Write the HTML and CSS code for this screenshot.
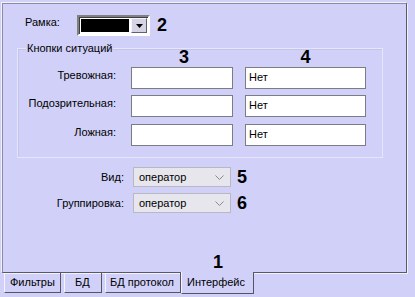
FILE: index.html
```html
<!DOCTYPE html>
<html>
<head>
<meta charset="utf-8">
<link rel="stylesheet" href="styles.css">
</head>
<body>
<div class="window">
  <div class="panel">
    <div class="frame-row">
      <span class="frame-label">Рамка:</span>
      <div class="colorbox">
        <div class="swatch"></div>
        <div class="dropbtn"><svg width="7" height="4" viewBox="0 0 7 4"><polygon points="0,0 7,0 3.5,4" fill="#000"/></svg></div>
      </div>
      <span class="num num-2">2</span>
    </div>

    <div class="group">
      <span class="legend">Кнопки ситуаций</span>
      <div class="grid">
        <span></span>
        <span class="num colnum c1">3</span>
        <span class="num colnum c2">4</span>

        <span class="rlabel">Тревожная:</span>
        <div class="field c1"></div>
        <div class="field c2">Нет</div>

        <span class="rlabel">Подозрительная:</span>
        <div class="field c1"></div>
        <div class="field c2">Нет</div>

        <span class="rlabel">Ложная:</span>
        <div class="field c1"></div>
        <div class="field c2">Нет</div>
      </div>
    </div>

    <div class="selects">
      <span class="slabel">Вид:</span>
      <div class="select"><span>оператор</span><svg width="9" height="5" viewBox="0 0 9 5"><polyline points="0.5,0.5 4.5,4.5 8.5,0.5" fill="none" stroke="#8a8a8a" stroke-width="1"/></svg></div>
      <span class="num">5</span>

      <span class="slabel">Группировка:</span>
      <div class="select"><span>оператор</span><svg width="9" height="5" viewBox="0 0 9 5"><polyline points="0.5,0.5 4.5,4.5 8.5,0.5" fill="none" stroke="#8a8a8a" stroke-width="1"/></svg></div>
      <span class="num">6</span>
    </div>

    <div class="tabnum-row"><span class="num">1</span></div>
  </div>

  <div class="tabs">
    <div class="tab tab-1">Фильтры</div>
    <div class="tab tab-2">БД</div>
    <div class="tab tab-3">БД протокол</div>
    <div class="tab tab-active">Интерфейс</div>
  </div>
</div>
</body>
</html>
```

FILE: styles.css
```css
html, body {
  margin: 0;
  padding: 0;
  background: #d0d0f8;
}

body {
  font-family: "Liberation Sans", Arial, sans-serif;
  font-size: 11px;
  color: #000;
}

.window {
  width: 415px;
  height: 297px;
  overflow: hidden;
}

.panel {
  margin: 3px 0 0 2px;
  width: 403px;
  height: 268px;
  border: 1px solid;
  border-color: #8c8ca0 #5a5a64 #5a5a64 #8c8ca0;
  box-shadow: -1px -1px 0 #f0f0ff, 1px 1px 0 #f0f0ff;
  display: flex;
  flex-direction: column;
}

.frame-row {
  display: flex;
  align-items: flex-start;
  margin-top: 11px;
  padding-left: 22px;
  height: 21px;
}

.frame-label {
  width: 52px;
  line-height: 13px;
  margin-top: 1px;
}

.colorbox {
  box-sizing: border-box;
  width: 73px;
  height: 21px;
  display: flex;
  background: #fff;
  border: 2px solid;
  border-color: #808080 #ffffff #ffffff #808080;
  box-shadow: inset 1px 1px 0 #404040;
  padding: 2px 1px 2px 2px;
  gap: 2px;
}

.swatch {
  flex: 1;
  background: #000;
}

.dropbtn {
  width: 14px;
  margin: -1px 0;
  background: #d4d4e4;
  border: 1px solid;
  border-color: #f4f4ff #606070 #606070 #f4f4ff;
  display: flex;
  align-items: center;
  justify-content: center;
}

.num {
  font-weight: bold;
  font-size: 18px;
  line-height: 18px;
}

.num-2 {
  margin-left: 7px;
  margin-top: 1px;
}

.group {
  position: relative;
  margin: 12px 0 0 14px;
  width: 364px;
  height: 108px;
  border: 1px solid #e6e6fb;
  box-shadow: inset 1px 1px 0 #c4c4ea;
}

.legend {
  position: absolute;
  top: -7px;
  left: 8px;
  padding: 0 1px;
  line-height: 13px;
  background: #d0d0f8;
}

.grid {
  display: grid;
  grid-template-columns: 113px 114px 121px;
  grid-template-rows: 18px 28px 29px 22px;
  align-items: start;
}

.c1 {
  width: 102px;
}

.c2 {
  width: 121px;
}

.colnum {
  text-align: center;
  line-height: 16px;
}

.colnum.c1 {
  padding-left: 4px;
  box-sizing: border-box;
}

.rlabel {
  text-align: right;
  padding-right: 15px;
  line-height: 13px;
  padding-top: 2px;
}

.field {
  box-sizing: border-box;
  height: 22px;
  background: #fff;
  border: 1px solid #7c7c84;
  padding: 3px 3px 0 3px;
  line-height: 13px;
}

.selects {
  display: grid;
  grid-template-columns: 121px 98px auto;
  grid-template-rows: 20px 20px;
  column-gap: 9px;
  row-gap: 6px;
  margin-top: 9px;
  align-items: center;
}

.selects .num {
  margin-left: -3px;
}

.slabel {
  text-align: right;
  line-height: 13px;
}

.select {
  box-sizing: border-box;
  height: 20px;
  background: #e6e6ec;
  border: 1px solid #b8b8c4;
  display: flex;
  align-items: center;
  justify-content: space-between;
  padding: 0 6px 0 5px;
  line-height: 13px;
}

.tabnum-row {
  margin-top: auto;
  padding-left: 210px;
  height: 19px;
}

.tabs {
  display: flex;
  align-items: flex-start;
  padding-left: 4px;
  height: 21px;
}

.tab {
  box-sizing: border-box;
  height: 20px;
  border: 1px solid;
  border-top: none;
  border-color: #f4f4ff #55555f #55555f #f4f4ff;
  line-height: 13px;
  padding: 3px 0 0 5px;
  margin-right: 3px;
}

.tab-1 { width: 57px; }
.tab-2 { width: 38px; padding-left: 10px; }
.tab-3 { width: 76px; padding-left: 4px; margin-right: 0; }

.tab-active {
  width: 73px;
  height: 22px;
  margin-top: -1px;
  background: #d0d0f8;
  padding: 4px 0 0 5px;
  position: relative;
  z-index: 1;
}
```
